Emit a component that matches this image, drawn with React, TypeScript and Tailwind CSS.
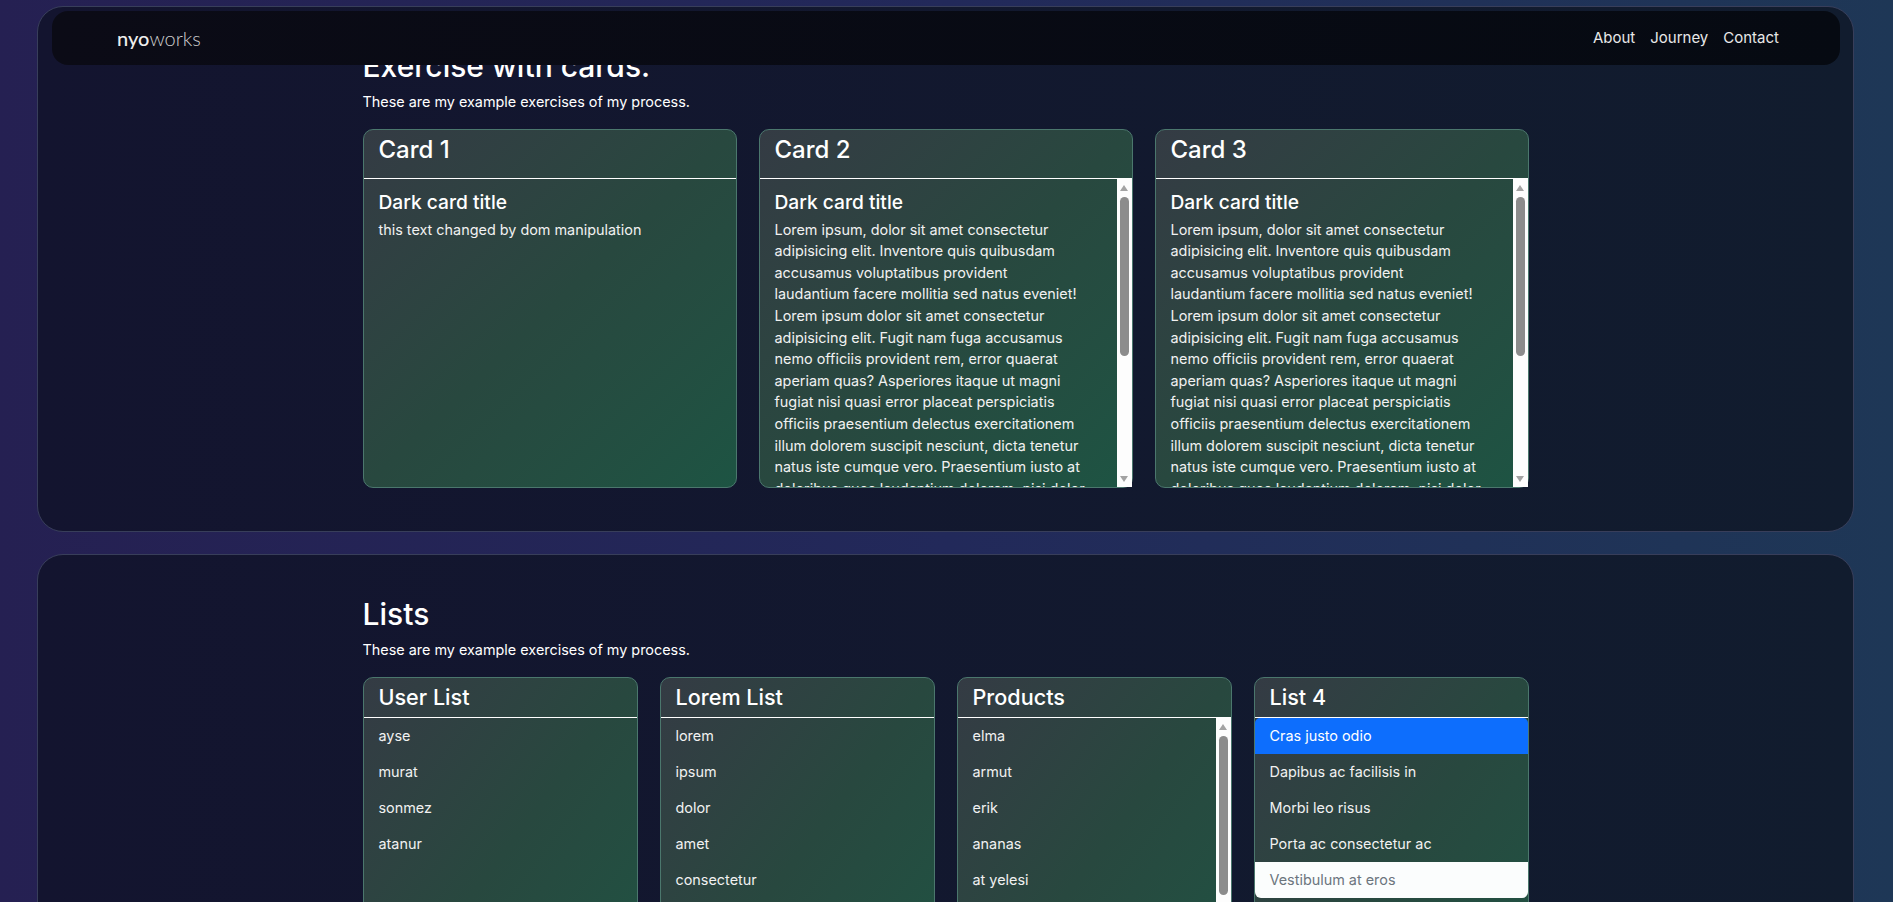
import React from 'react'

const loremLines = [
  'Lorem ipsum, dolor sit amet consectetur',
  'adipisicing elit. Inventore quis quibusdam',
  'accusamus voluptatibus provident',
  'laudantium facere mollitia sed natus eveniet!',
  'Lorem ipsum dolor sit amet consectetur',
  'adipisicing elit. Fugit nam fuga accusamus',
  'nemo officiis provident rem, error quaerat',
  'aperiam quas? Asperiores itaque ut magni',
  'fugiat nisi quasi error placeat perspiciatis',
  'officiis praesentium delectus exercitationem',
  'illum dolorem suscipit nesciunt, dicta tenetur',
  'natus iste cumque vero. Praesentium iusto at',
  'doloribus quos laudantium dolorem, nisi dolor',
]

function FakeScrollbar() {
  return (
    <div className="relative flex w-[15px] shrink-0 flex-col items-center bg-[#fdfdfd]">
      <svg width="8" height="6" viewBox="0 0 8 6" className="mt-[6px]">
        <path d="M4 0 L8 6 L0 6 Z" fill="#a3a3a3" />
      </svg>
      <div className="mt-[6px] h-[159px] w-[9px] rounded-full bg-[#8c8c8c]" />
      <div className="flex-1" />
      <svg width="8" height="6" viewBox="0 0 8 6" className="mb-[5px]">
        <path d="M0 0 L8 0 L4 6 Z" fill="#a3a3a3" />
      </svg>
    </div>
  )
}

function Card({ title, text, scroll }: { title: string; text?: string; scroll?: boolean }) {
  return (
    <div className="flex h-[359px] w-[374px] flex-col rounded-[10px] border border-[#4b776d] bg-linear-to-br from-[#343b44] via-[#28483f] to-[#1d5443]">
      <div className="h-[49px] shrink-0 border-b border-white pl-[15px] pt-[5px] text-[24px] leading-[29px] font-medium">
        {title}
      </div>
      <div className="flex min-h-0 flex-1">
        <div className="min-w-0 flex-1 overflow-hidden rounded-bl-[10px] pl-[15px] pt-[12px]">
          <div className="mb-[5px] text-[19.2px] leading-[23px] font-medium">Dark card title</div>
          {text ? (
            <div className="text-[14.4px] leading-[21.6px] text-[#f1f1f1]">{text}</div>
          ) : (
            loremLines.map((l) => (
              <div key={l} className="whitespace-nowrap text-[14.4px] leading-[21.6px] text-[#f1f1f1]">
                {l}
              </div>
            ))
          )}
        </div>
        {scroll && <FakeScrollbar />}
      </div>
    </div>
  )
}

type Item = { label: string; active?: boolean; muted?: boolean }

function ListCard({ title, items, scroll }: { title: string; items: Item[]; scroll?: boolean }) {
  return (
    <div className="flex h-[359px] w-[275px] flex-col rounded-[10px] border border-[#4b776d] bg-linear-to-br from-[#343b44] via-[#28483f] to-[#1d5443]">
      <div className="h-[40px] shrink-0 border-b border-white pl-[15px] pt-[6px] text-[21.6px] leading-[26px] font-medium">
        {title}
      </div>
      <div className="flex min-h-0 flex-1">
        <div className="min-w-0 flex-1 overflow-hidden">
          {items.map((it) => (
            <div
              key={it.label}
              className={
                it.active
                  ? 'h-[36px] rounded-t-[5px] bg-[#0d6efd] pl-[15px] pt-[7px] text-[14.4px] leading-[21.6px] text-white'
                  : it.muted
                    ? 'h-[36px] rounded-b-[6px] bg-[#fbfdfd] pl-[15px] pt-[7px] text-[14.4px] leading-[21.6px] text-[#6c757d]'
                    : 'h-[36px] pl-[15px] pt-[7px] text-[14.4px] leading-[21.6px] text-[#f1f1f1]'
              }
            >
              {it.label}
            </div>
          ))}
        </div>
        {scroll && <FakeScrollbar />}
      </div>
    </div>
  )
}

const toItems = (xs: string[]): Item[] => xs.map((label) => ({ label }))

export default function App() {
  return (
    <div className="relative h-[902px] overflow-hidden bg-linear-to-r from-[#252052] via-[#22295a] to-[#1e3756] pl-[37px] pr-[39px] pt-[6px] font-['Inter',sans-serif] text-white">
      <nav className="absolute left-[52px] right-[53px] top-[11px] z-10 flex h-[54px] items-center justify-between rounded-[16px] bg-linear-to-r from-[#0b0b16] to-[#060a12] pl-[65px] pr-[61px]">
        <div className="font-['Lato',sans-serif] text-[20px]">
          <span className="font-medium text-[#eeeeee]">nyo</span>
          <span className="font-light text-[#cfcfcf]">works</span>
        </div>
        <div className="flex gap-[15px] text-[15px] text-[#e8e8e8]">
          <a>About</a>
          <a>Journey</a>
          <a>Contact</a>
        </div>
      </nav>

      <div className="flex flex-col gap-[22px]">
        <section className="h-[526px] rounded-[26px] border border-[#383e5a] bg-linear-to-r from-[#13142f] to-[#111c2e]">
          <div className="mx-auto w-[1166px] pt-[41px]">
            <h2 className="mb-[7px] text-[30px] leading-[36px] font-medium">Exercise with cards.</h2>
            <p className="mb-[16px] text-[14.4px] leading-[21.6px]">These are my example exercises of my process.</p>
            <div className="flex gap-[22px]">
              <Card title="Card 1" text="this text changed by dom manipulation" />
              <Card title="Card 2" scroll />
              <Card title="Card 3" scroll />
            </div>
          </div>
        </section>

        <section className="h-[524px] rounded-[26px] border border-[#383e5a] bg-linear-to-r from-[#13142f] to-[#111c2e]">
          <div className="mx-auto w-[1166px] pt-[41px]">
            <h2 className="mb-[7px] text-[30px] leading-[36px] font-medium">Lists</h2>
            <p className="mb-[16px] text-[14.4px] leading-[21.6px]">These are my example exercises of my process.</p>
            <div className="flex gap-[22px]">
              <ListCard title="User List" items={toItems(['ayse', 'murat', 'sonmez', 'atanur'])} />
              <ListCard
                title="Lorem List"
                items={toItems(['lorem', 'ipsum', 'dolor', 'amet', 'consectetur', 'adipisicing', 'elit'])}
              />
              <ListCard
                title="Products"
                scroll
                items={toItems(['elma', 'armut', 'erik', 'ananas', 'at yelesi', 'kiraz', 'muz', 'karpuz', 'kavun', 'uzum'])}
              />
              <ListCard
                title="List 4"
                items={[
                  { label: 'Cras justo odio', active: true },
                  { label: 'Dapibus ac facilisis in' },
                  { label: 'Morbi leo risus' },
                  { label: 'Porta ac consectetur ac' },
                  { label: 'Vestibulum at eros', muted: true },
                ]}
              />
            </div>
          </div>
        </section>
      </div>
    </div>
  )
}
